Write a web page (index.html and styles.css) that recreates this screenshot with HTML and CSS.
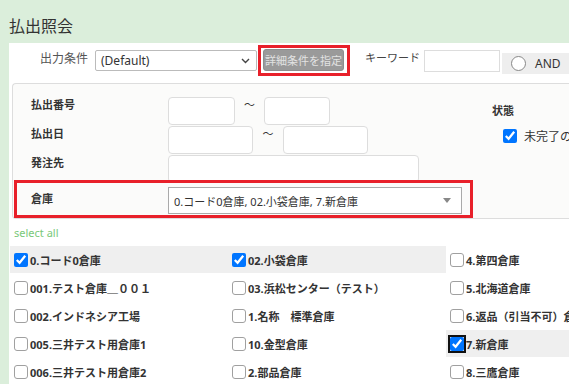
FILE: index.html
```html
<!DOCTYPE html>
<html lang="ja">
<head>
    <meta charset="UTF-8">
    <meta name="viewport" content="width=device-width, initial-scale=1.0">
    <title>払出照会</title>
    <link rel="stylesheet" href="styles.css">
</head>
<body>
    <div class="page">
        <h1 class="title">払出照会</h1>
        <div class="main">
            <div class="toolbar">
                <span class="tb-label">出力条件</span>
                <div class="cond-select">
                    <span>(Default)</span>
                    <svg class="chevron" width="9" height="6" viewBox="0 0 9 6"><path d="M1 1l3.5 3.5L8 1" fill="none" stroke="#444" stroke-width="1.4"/></svg>
                </div>
                <div class="mark-btn">
                    <button class="detail-btn">詳細条件を指定</button>
                </div>
                <span class="kw-label">キーワード</span>
                <input class="kw-input" type="text">
                <div class="andor">
                    <span class="radio"></span>
                    <span>AND</span>
                </div>
            </div>

            <div class="panel">
                <div class="form">
                    <div class="frow">
                        <span class="flabel">払出番号</span>
                        <input class="box w-no" type="text">
                        <span class="tilde t-no">～</span>
                        <input class="box w-no2" type="text">
                    </div>
                    <div class="frow">
                        <span class="flabel">払出日</span>
                        <input class="box w-date" type="text">
                        <span class="tilde t-date">～</span>
                        <input class="box w-date" type="text">
                    </div>
                    <div class="frow">
                        <span class="flabel">発注先</span>
                        <input class="box w-order" type="text">
                    </div>
                    <div class="frow mark-row">
                        <span class="flabel">倉庫</span>
                        <div class="wh-select">
                            <span>0.コード0倉庫, 02.小袋倉庫, 7.新倉庫</span>
                            <span class="caret"></span>
                        </div>
                    </div>
                </div>
                <div class="status">
                    <div class="status-title">状態</div>
                    <label class="status-opt"><input type="checkbox" checked>未完了のみ</label>
                </div>
            </div>

            <div class="select-all">select all</div>

            <div class="wh-grid">
                <label class="wh-item on"><input type="checkbox" checked>0.コード0倉庫</label>
                <label class="wh-item"><input type="checkbox">001.テスト倉庫＿００１</label>
                <label class="wh-item"><input type="checkbox">002.インドネシア工場</label>
                <label class="wh-item"><input type="checkbox">005.三井テスト用倉庫1</label>
                <label class="wh-item"><input type="checkbox">006.三井テスト用倉庫2</label>
                <label class="wh-item on"><input type="checkbox" checked>02.小袋倉庫</label>
                <label class="wh-item"><input type="checkbox">03.浜松センター（テスト）</label>
                <label class="wh-item"><input type="checkbox">1.名称　標準倉庫</label>
                <label class="wh-item"><input type="checkbox">10.金型倉庫</label>
                <label class="wh-item"><input type="checkbox">2.部品倉庫</label>
                <label class="wh-item"><input type="checkbox">4.第四倉庫</label>
                <label class="wh-item"><input type="checkbox">5.北海道倉庫</label>
                <label class="wh-item"><input type="checkbox">6.返品（引当不可）倉庫</label>
                <label class="wh-item on"><input class="focused" type="checkbox" checked>7.新倉庫</label>
                <label class="wh-item"><input type="checkbox">8.三鷹倉庫</label>
            </div>
        </div>
    </div>
</body>
</html>
```

FILE: styles.css
```css
html, body {
    margin: 0;
    height: 100%;
    overflow: hidden;
}
body {
    font-family: "Noto Sans", "Noto Sans CJK JP", sans-serif;
    color: #333;
    background-color: #dbeedb;
}
.page {
    width: 569px;
    height: 384px;
    overflow: hidden;
}
.title {
    margin: 0;
    height: 43px;
    padding: 16px 0 0 9px;
    font-size: 16px;
    font-weight: normal;
    line-height: 20px;
    color: #333;
    box-sizing: border-box;
    overflow: hidden;
}
.main {
    margin-left: 9px;
    width: 800px;
    height: 341px;
    background-color: white;
}

/* top toolbar */
.toolbar {
    display: flex;
    align-items: flex-start;
    height: 40px;
}
.tb-label {
    margin: 8px 0 0 31px;
    width: 48px;
    font-size: 12px;
    line-height: 16px;
    color: #555;
}
.cond-select {
    display: flex;
    align-items: center;
    justify-content: space-between;
    box-sizing: border-box;
    margin: 7px 0 0 7px;
    width: 162px;
    height: 21px;
    padding: 0 6px 0 5px;
    border: 1px solid #bbb;
    border-radius: 2px;
    font-size: 12px;
    background-color: white;
}
.mark-btn {
    margin: 2px 0 0 1px;
    padding: 1px 3px 2px 2px;
    border: 3px solid #e8202a;
}
.detail-btn {
    display: block;
    width: 81px;
    height: 22px;
    padding: 0;
    border: 1px solid #8d8d8d;
    border-radius: 3px;
    background-color: #9a9a9a;
    color: #e2e2e2;
    font-family: inherit;
    font-size: 11px;
}
.kw-label {
    margin: 7px 0 0 15px;
    width: 59px;
    font-size: 11px;
    line-height: 16px;
    color: #444;
}
.kw-input {
    box-sizing: border-box;
    margin: 7px 0 0 0;
    width: 76px;
    height: 22px;
    border: 1px solid #ddd;
    padding: 0;
}
.andor {
    display: flex;
    align-items: center;
    margin: 10px 0 0 2px;
    width: 120px;
    height: 21px;
    padding-left: 9px;
    background-color: #eee;
    font-size: 12px;
}
.radio {
    box-sizing: border-box;
    width: 15px;
    height: 15px;
    margin-right: 9px;
    border: 1px solid #888;
    border-radius: 50%;
    background-color: white;
}

/* condition panel */
.panel {
    display: flex;
    margin-left: 3px;
    padding: 13px 0 0 1px;
    border: 1px solid #ddd;
    border-right: none;
    border-radius: 4px 0 0 4px;
    background-color: #fbfbfa;
}
.form {
    width: 459px;
}
.frow {
    display: flex;
    align-items: flex-start;
    padding-left: 17px;
    margin-bottom: 1px;
}
.flabel {
    width: 137px;
    font-size: 11px;
    font-weight: bold;
    line-height: 16px;
}
.box {
    box-sizing: border-box;
    height: 28px;
    margin: 0;
    padding: 0;
    border: 1px solid #ddd;
    border-radius: 4px;
    background-color: white;
}
.w-no { width: 67px; }
.w-no2 { width: 66px; }
.w-date { width: 85px; }
.w-order { width: 251px; }
.tilde {
    text-align: center;
    font-size: 11px;
    line-height: 16px;
}
.t-no { width: 29px; }
.t-date { width: 30px; }
.mark-row {
    position: relative;
    margin-top: -4px;
    margin-bottom: 0;
    padding: 4px 0 0 14px;
    border: 3px solid #e8202a;
    height: 28px;
}
.mark-row .flabel {
    padding-top: 4px;
}
.wh-select {
    display: flex;
    align-items: center;
    justify-content: space-between;
    box-sizing: border-box;
    width: 294px;
    height: 27px;
    padding: 0 10px 0 5px;
    border: 1px solid #aaa;
    background-color: white;
    font-size: 11px;
}
.caret {
    width: 0;
    height: 0;
    border-left: 4px solid transparent;
    border-right: 4px solid transparent;
    border-top: 5px solid #888;
}
.status {
    margin-left: 19px;
    padding-top: 6px;
}
.status-title {
    font-size: 11px;
    font-weight: bold;
    line-height: 16px;
}
.status-opt {
    display: flex;
    align-items: center;
    margin: 8px 0 0 11px;
    font-size: 12px;
    white-space: nowrap;
}
.status-opt input {
    width: 14px;
    height: 14px;
    margin: 0 7px 0 0;
}

/* warehouse list */
.select-all {
    margin: 6px 0 5px 5px;
    font-size: 11px;
    line-height: 16px;
    color: #79c879;
}
.wh-grid {
    display: grid;
    grid-auto-flow: column;
    grid-template-rows: repeat(5, 28px);
    grid-template-columns: repeat(3, 218px);
    margin-left: 1px;
}
.wh-item {
    display: flex;
    align-items: center;
    height: 27px;
    padding-left: 4px;
    font-size: 11px;
    font-weight: bold;
    white-space: nowrap;
}
.wh-item.on {
    background-color: #efefef;
}
.wh-item input {
    width: 14px;
    height: 14px;
    margin: 0 2px 0 0;
}
.wh-item input:not(:checked) {
    appearance: none;
    box-sizing: border-box;
    border: 1px solid #a0a0a0;
    border-radius: 3px;
    background-color: white;
}
.wh-item input.focused {
    outline: 2px solid #111;
    outline-offset: 0;
    border-radius: 3px;
}
```
